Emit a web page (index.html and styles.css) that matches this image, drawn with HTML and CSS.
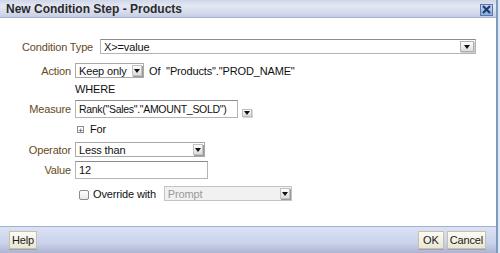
FILE: index.html
```html
<!DOCTYPE html>
<html lang="en">
<head>
    <meta charset="UTF-8">
    <title>New Condition Step - Products</title>
    <link rel="stylesheet" href="styles.css">
</head>
<body>

    <div id="dialog">

        <div class="titlebar">
            <span class="title">New Condition Step - Products</span>
            <span class="close">
                <svg width="9" height="9" viewBox="0 0 9 9"><path d="M1 1 L8 8 M8 1 L1 8" stroke="#1c3a70" stroke-width="2.2"/></svg>
            </span>
        </div>

        <div class="content">

            <div class="field type_row">
                <span class="label">Condition Type</span>
                <div class="box wide">
                    <span>X&gt;=value</span>
                    <span class="drop small_drop"></span>
                </div>
            </div>

            <div class="field action_row">
                <span class="label">Action</span>
                <div class="box select keep">
                    <span>Keep only</span>
                    <span class="drop"></span>
                </div>
                <span class="of">Of &nbsp;"Products"."PROD_NAME"</span>
            </div>

            <div class="field where_row">
                <span class="label"></span>
                <span>WHERE</span>
            </div>

            <div class="field measure_row">
                <span class="label">Measure</span>
                <div class="box tall measure">
                    <span>Rank("Sales"."AMOUNT_SOLD")</span>
                </div>
                <span class="drop loose"></span>
            </div>

            <div class="field for_row">
                <span class="label"></span>
                <span class="expander">+</span>
                <span>For</span>
            </div>

            <div class="field operator_row">
                <span class="label">Operator</span>
                <div class="box select operator">
                    <span>Less than</span>
                    <span class="drop"></span>
                </div>
            </div>

            <div class="field value_row">
                <span class="label">Value</span>
                <div class="box tall value">
                    <span>12</span>
                </div>
            </div>

            <div class="field override_row">
                <span class="label"></span>
                <span class="checkbox"></span>
                <span class="override">Override with</span>
                <div class="box select prompt">
                    <span>Prompt</span>
                    <span class="drop"></span>
                </div>
            </div>

        </div>

        <div class="footer">
            <span class="button">Help</span>
            <span class="spacer"></span>
            <span class="button ok">OK</span>
            <span class="button">Cancel</span>
        </div>

    </div>

</body>
</html>
```

FILE: styles.css
```css
*{
    font-family: "Liberation Sans", Arial, sans-serif;
    box-sizing: border-box;
}

body{
    margin: 0;
    padding: 0;

    width: 500px;
    height: 253px;

    background: #e4e6ea;
    overflow: hidden;
}

#dialog{
    width: 498px;
    height: 253px;

    display: flex;
    flex-direction: column;

    background: #fff;
    border-right: 2px solid #7d9ac2;
}

.titlebar{
    height: 18px;
    padding: 0 3px 0 6px;

    display: flex;
    align-items: center;
    justify-content: space-between;

    background: linear-gradient(#cfd6e8, #e4e8f3 35%, #d6dcec 70%, #c6cee4);
    border-bottom: 1px solid #a3b2d4;
}

.title{
    font-size: 12px;
    font-weight: bold;
    color: #2b2b2b;
}

.close{
    width: 13px;
    height: 12px;
    margin-top: 2px;

    display: grid;
    place-items: center;

    background: linear-gradient(#c4d5ee, #8fadd8);
    border: 1px solid #5578b0;
}

.content{
    flex: 1;
    padding-top: 21px;

    font-size: 11px;
    letter-spacing: -0.15px;
    color: #111;
    white-space: nowrap;
}

.field{
    display: flex;
    align-items: center;
}

.field .label{
    width: 71px;
    margin-right: 4px;
    flex-shrink: 0;

    text-align: right;
    color: #654a1c;
}

.type_row{
    height: 15px;
    padding-left: 22px;
    padding-right: 20px;

    .label{
        width: auto;
        margin-right: 7px;
    }
}

.box{
    height: 15px;
    padding-left: 3px;
    flex-shrink: 0;

    display: flex;
    align-items: center;
    justify-content: space-between;
    overflow: hidden;

    background: #fff;
    border: 1px solid #b4b4b4;
    border-top-color: #8c8c8c;
}

.wide{
    flex: 1;
    padding-right: 1px;
}

.tall{
    height: 18px;
}

.select{
    padding-right: 1px;
    border-color: #a9a9a9;
}

.drop{
    width: 10px;
    height: 11px;
    flex-shrink: 0;

    display: grid;
    place-items: center;

    background: linear-gradient(#fdfdfd, #dcdcdc);
    border: 1px solid #c2c2c2;
    box-shadow: 1px 1px 0 #9a9a9a;
}

.drop::after{
    content: "";
    border-left: 3px solid transparent;
    border-right: 3px solid transparent;
    border-top: 4px solid #111;
}

.small_drop{
    width: 14px;
    height: 11px;

    border: 1px solid #b0b0b0;
    box-shadow: 1px 1px 0 #d0d0d0;
}

.loose{
    height: 8px;
    margin: 7px 0 0 4px;

    border: 1px solid #bcbcbc;
    box-shadow: 1px 1px 0 #d6d6d6;
}

.action_row{
    height: 15px;
    margin-top: 9px;
}

.keep{
    width: 69px;
}

.of{
    margin-left: 5px;
}

.where_row{
    height: 12px;
    margin-top: 5px;
}

.measure_row{
    height: 18px;
    margin-top: 5px;
}

.measure{
    width: 163px;

    font-size: 10.5px;
    letter-spacing: -0.3px;
}

.for_row{
    height: 12px;
    margin-top: 5px;
}

.expander{
    width: 7px;
    height: 7px;
    margin: 0 6px 0 2px;

    display: grid;
    place-items: center;

    font-size: 8px;
    line-height: 1;
    color: #333;
    border: 1px solid #8a8a8a;
}

.operator_row{
    height: 15px;
    margin-top: 7px;
}

.operator{
    width: 130px;
}

.value_row{
    height: 18px;
    margin-top: 4px;
}

.value{
    width: 133px;
}

.override_row{
    height: 15px;
    margin-top: 7px;
}

.checkbox{
    width: 10px;
    height: 10px;
    margin: 3px 4px 0 4px;

    background: linear-gradient(#fff, #e8e8e8);
    border: 1px solid #8c8c8c;
    border-radius: 2px;
}

.override{
    margin-right: 8px;
}

.prompt{
    width: 128px;

    color: #9a9a9a;
    background: #f1f1f1;
    border-color: #c4c4c4;
}

.footer{
    height: 27px;
    padding: 0 10px 0 9px;

    display: flex;
    align-items: center;
    gap: 3px;

    background: linear-gradient(#dbe2f4, #cbd3ec 60%, #aeb4d2);
    border-top: 1px solid #a2b0d2;
}

.spacer{
    flex: 1;
}

.button{
    height: 18px;
    padding: 0 2px;

    display: grid;
    place-items: center;

    font-size: 11px;
    letter-spacing: -0.15px;
    color: #1a1a1a;

    background: linear-gradient(#fdfcf5, #e9e6d4);
    border: 1px solid #c6c2a8;
    box-shadow: 0 1px 0 #9da0b8;
}

.ok{
    padding: 0 4px;
}
```
